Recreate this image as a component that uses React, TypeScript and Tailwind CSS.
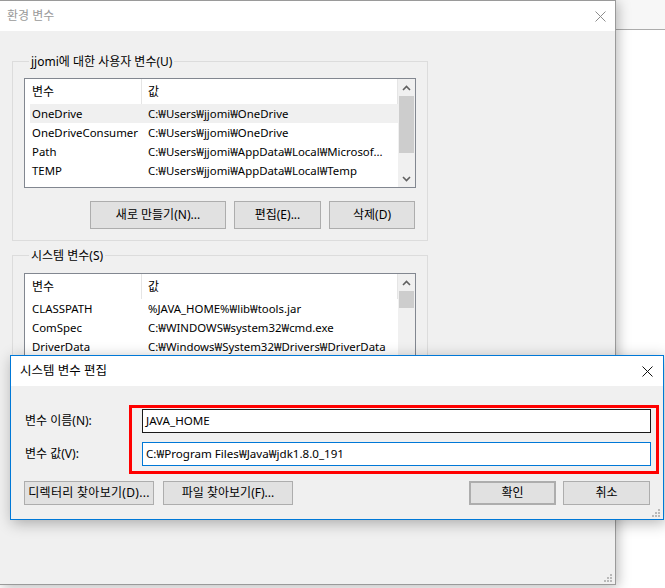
import React from 'react';

const userVars = [
  ['OneDrive', 'C:₩Users₩jjomi₩OneDrive'],
  ['OneDriveConsumer', 'C:₩Users₩jjomi₩OneDrive'],
  ['Path', 'C:₩Users₩jjomi₩AppData₩Local₩Microsof...'],
  ['TEMP', 'C:₩Users₩jjomi₩AppData₩Local₩Temp'],
];

const systemVars = [
  ['CLASSPATH', '%JAVA_HOME%₩lib₩tools.jar'],
  ['ComSpec', 'C:₩WINDOWS₩system32₩cmd.exe'],
  ['DriverData', 'C:₩Windows₩System32₩Drivers₩DriverData'],
];

function Chevron({ down }: { down?: boolean }) {
  return (
    <svg width="9" height="6" viewBox="0 0 9 6" className="block">
      <polyline
        points={down ? '1,1 4.5,4.5 8,1' : '1,5 4.5,1.5 8,5'}
        fill="none"
        stroke="#606060"
        strokeWidth="1.6"
      />
    </svg>
  );
}

function CloseIcon({ color }: { color: string }) {
  return (
    <svg width="11" height="11" viewBox="0 0 11 11" className="block">
      <path d="M0.5 0.5 L10.5 10.5 M10.5 0.5 L0.5 10.5" stroke={color} strokeWidth="1" />
    </svg>
  );
}

function Grip() {
  return (
    <svg width="8" height="8" viewBox="0 0 8 8" className="block">
      <g fill="#b9b9b9">
        <rect x="6" y="0" width="2" height="2" />
        <rect x="3" y="3" width="2" height="2" />
        <rect x="6" y="3" width="2" height="2" />
        <rect x="0" y="6" width="2" height="2" />
        <rect x="3" y="6" width="2" height="2" />
        <rect x="6" y="6" width="2" height="2" />
      </g>
    </svg>
  );
}

function VarList({
  rows,
  selected,
  height,
  thumbHeight,
}: {
  rows: string[][];
  selected?: number;
  height: string;
  thumbHeight: string;
}) {
  return (
    <div className={`flex overflow-hidden border border-[#828790] bg-white ${height}`}>
      <div className="flex-1">
        <div className="flex h-[25px] border-r border-[#e5e5e5]">
          <div className="flex w-[117px] items-center border-r border-[#e5e5e5] pl-[7px]">변수</div>
          <div className="flex items-center pl-[6px]">값</div>
        </div>
        {rows.map(([name, value], i) => (
          <div
            key={name}
            className={`ml-[5px] flex h-[19px] items-center whitespace-nowrap text-[11.4px] ${i === selected ? 'bg-[#f0f0f0]' : ''}`}
          >
            <div className="w-[111px] pl-[2px]">{name}</div>
            <div className="pl-[7px]">{value}</div>
          </div>
        ))}
      </div>
      <div className="flex w-[17px] flex-col bg-[#f0f0f0]">
        <div className="flex h-[17px] items-center justify-center">
          <Chevron />
        </div>
        <div className="flex-1">
          <div className={`mx-[1px] bg-[#cdcdcd] ${thumbHeight}`} />
        </div>
        <div className="flex h-[17px] items-center justify-center">
          <Chevron down />
        </div>
      </div>
    </div>
  );
}

function Button({ label, className = '' }: { label: string; className?: string }) {
  return (
    <div
      className={`flex items-center justify-center whitespace-nowrap border border-[#adadad] bg-[#e1e1e1] ${className}`}
    >
      {label}
    </div>
  );
}

export default function App() {
  return (
    <div className="relative h-[588px] w-[665px] overflow-hidden bg-white font-['Noto_Sans','Noto_Sans_CJK_KR',sans-serif] text-[12px] text-black">
      {/* window behind */}
      <div className="h-[30px] border-b border-[#acacac] bg-[#f7f7f7]" />

      {/* 환경 변수 */}
      <div className="absolute left-0 top-0 flex h-[585px] w-[616px] flex-col border-r border-t border-b border-[#9a9a9a] bg-[#f0f0f0] shadow-[2px_2px_12px_rgba(0,0,0,0.28)]">
        <div className="flex h-[30px] items-center justify-between bg-white pl-[7px] pr-[9px] text-[#9a9a9a]">
          <span>환경 변수</span>
          <CloseIcon color="#8c8c8c" />
        </div>

        <div className="flex-1 px-[12px]">
          <fieldset className="mt-[22px] w-[416px] border border-[#dcdcdc] px-[11px] pb-[11px]">
            <legend className="ml-[5px] px-[2px] leading-[17px]">jjomi에 대한 사용자 변수(U)</legend>
            <div className="mt-[8px]">
              <VarList rows={userVars} selected={0} height="h-[110px]" thumbHeight="h-[57px]" />
            </div>
            <div className="mt-[13px] flex justify-end gap-[8px] pr-[1px]">
              <Button label="새로 만들기(N)..." className="h-[28px] w-[136px]" />
              <Button label="편집(E)..." className="h-[28px] w-[87px]" />
              <Button label="삭제(D)" className="h-[28px] w-[86px]" />
            </div>
          </fieldset>

          <fieldset className="mt-[6px] h-[250px] w-[416px] border border-[#dcdcdc] px-[11px]">
            <legend className="ml-[5px] px-[2px] leading-[17px]">시스템 변수(S)</legend>
            <div className="mt-[9px]">
              <VarList rows={systemVars} height="h-[200px]" thumbHeight="h-[17px]" />
            </div>
          </fieldset>
        </div>

        <div className="flex justify-end pb-[2px] pr-[3px]">
          <Grip />
        </div>
      </div>

      {/* 시스템 변수 편집 */}
      <div className="absolute left-[10px] top-[355px] flex h-[165px] w-[654px] flex-col border border-[#0078d7] bg-[#f0f0f0] shadow-[2px_3px_14px_rgba(0,0,0,0.3)]">
        <div className="flex h-[30px] items-center justify-between bg-white pl-[9px] pr-[10px] text-[12.5px]">
          <span>시스템 변수 편집</span>
          <CloseIcon color="#111111" />
        </div>

        <div className="flex pt-[19px]">
          <div className="flex w-[118px] flex-col gap-[9px] pl-[14px] pt-[4px]">
            <div className="flex h-[24px] items-center">변수 이름(N):</div>
            <div className="flex h-[24px] items-center">변수 값(V):</div>
          </div>
          <div className="flex w-[530px] flex-col gap-[9px] border-[3px] border-[#ff0000] pb-[5px] pl-[10px] pr-[5px] pt-[1px] text-[11.6px]">
            <div className="flex h-[24px] items-center border border-[#1a1a1a] bg-white pl-[3px]">JAVA_HOME</div>
            <div className="flex h-[24px] items-center border border-[#0078d7] bg-white pl-[3px]">
              C:₩Program Files₩Java₩jdk1.8.0_191
            </div>
          </div>
        </div>

        <div className="mt-[7px] flex h-[24px] items-stretch px-[13px]">
          <Button label="디렉터리 찾아보기(D)..." className="w-[130px] tracking-[0.3px]" />
          <Button label="파일 찾아보기(F)..." className="ml-[9px] w-[130px]" />
          <div className="flex-1" />
          <Button label="확인" className="w-[87px] border-2 border-[#0078d7]" />
          <Button label="취소" className="ml-[7px] w-[87px]" />
        </div>

        <div className="mt-auto flex justify-end pb-[2px] pr-[3px]">
          <Grip />
        </div>
      </div>
    </div>
  );
}
